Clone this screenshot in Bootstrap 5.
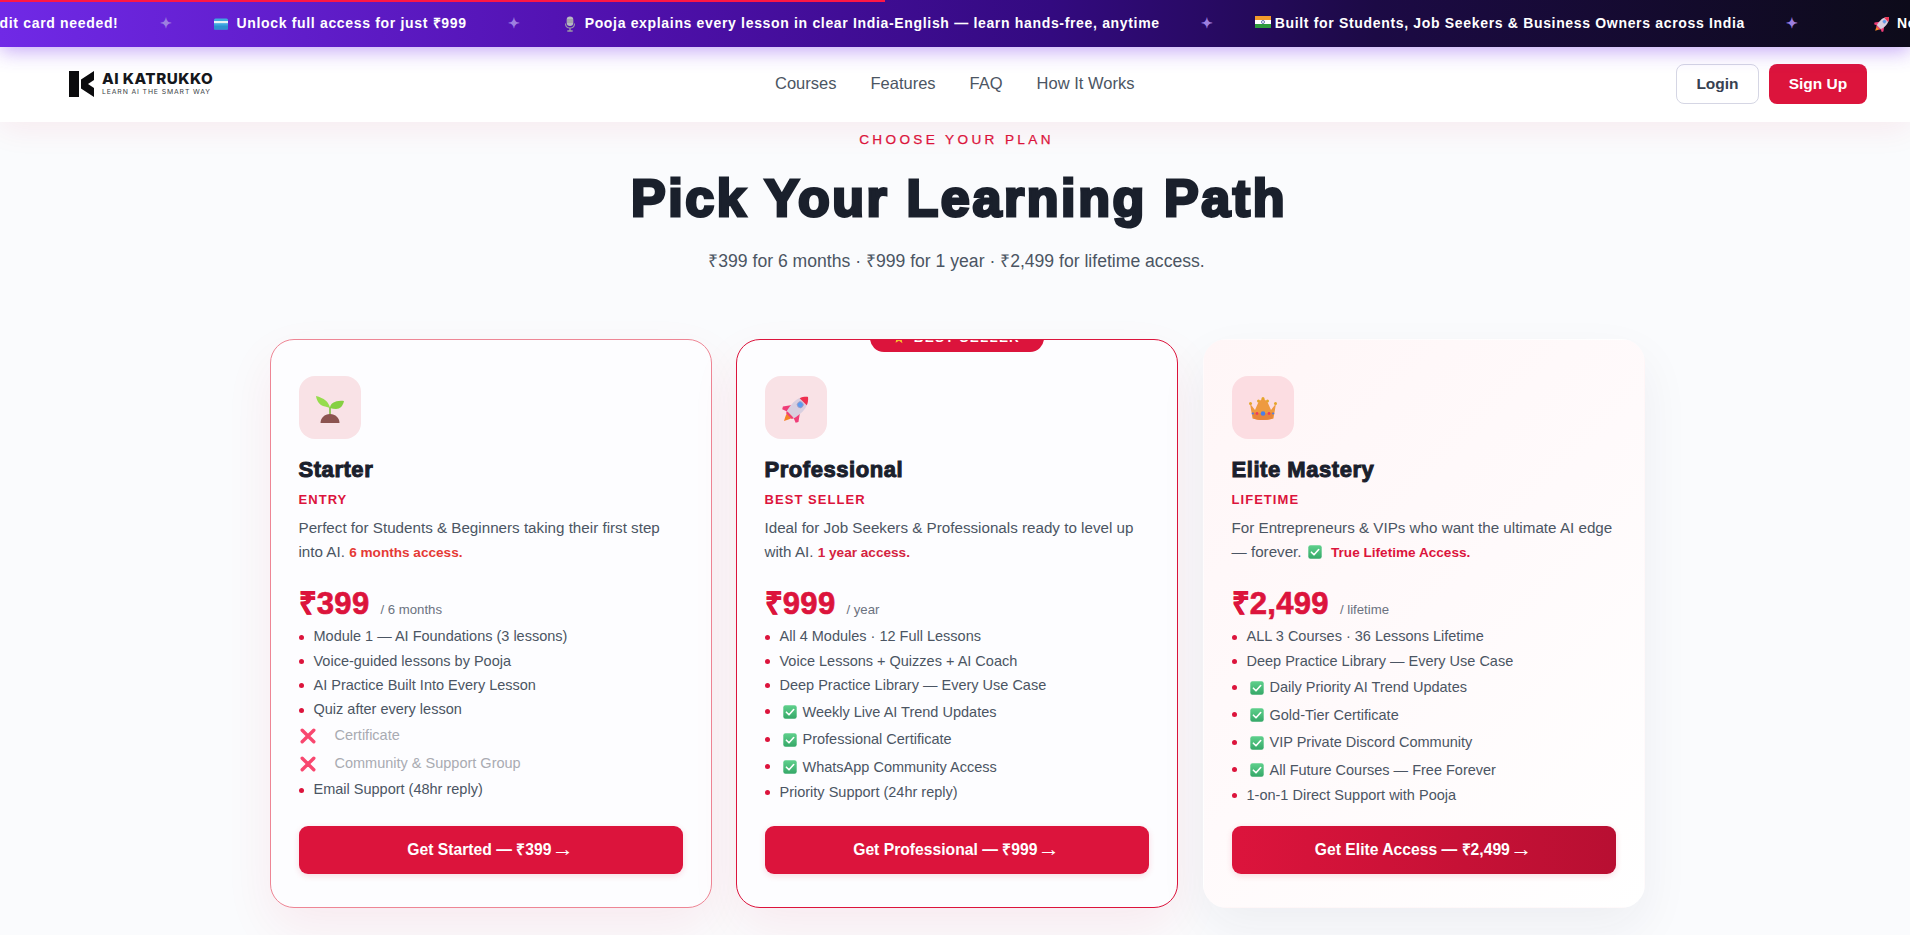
<!DOCTYPE html>
<html lang="en">
<head>
<meta charset="utf-8">
<title>AI Katrukko</title>
<link href="https://cdn.jsdelivr.net/npm/bootstrap@5.3.0/dist/css/bootstrap.min.css" rel="stylesheet">
<style>
html,body{height:935px;overflow:hidden}
body{font-family:"Liberation Sans",Arial,sans-serif;background:#fafbfd;color:#1a202c}
.promo-bar{height:47px;background:linear-gradient(90deg,#7029e6 0%,#4f10ac 33%,#330a80 55%,#1c0a45 72%,#0d0b1a 100%);overflow:hidden;position:relative;z-index:3;box-shadow:0 4px 20px rgba(124,58,237,.45)}
.promo-line{position:absolute;left:0;top:0;width:885px;height:2px;background:#ff1744}
.promo-track{height:47px;transform:translateX(-48px);white-space:nowrap;color:#fff;font-weight:700;font-size:14px;letter-spacing:.67px}
.promo-sep{color:#9d7fe0;font-size:14px;width:95px;text-align:center;flex:none}
.promo-ico{width:16px;height:16px;margin-right:7px;flex:none}
.promo-flag{height:12px;margin-right:4px;margin-bottom:3px}
.promo-far{margin-left:34px}
.top-nav{height:75px;background:#fff;padding:0 43px 2px 69px;position:relative;z-index:2;box-shadow:0 6px 32px rgba(220,20,60,.08)}
.logo-wrap{width:706px;flex:none}
.logo-text{line-height:1;margin-left:7px}
.logo-name{font-family:Inter,"Liberation Sans",sans-serif;font-weight:800;font-size:15.2px;color:#15171c;letter-spacing:.5px;display:block}
.logo-sub{font-family:Inter,"Liberation Sans",sans-serif;font-size:6.85px;color:#3b3f46;letter-spacing:.88px;display:block;margin-top:3px}
.top-links{gap:34px}
.top-links .nav-link{padding:0;color:#4b5563;font-size:16.5px}
.btn-login{width:83px;height:40px;background:#fff;border:1px solid #d5d6e4;border-radius:8px;color:#374151;font-weight:700;font-size:15.5px;padding:0}
.btn-signup{width:98px;height:40px;background:#dc143c;border:0;border-radius:8px;color:#fff;font-weight:700;font-size:15.5px;padding:0}
.nav-acts{gap:10px}
.plans{padding:9px 0 0 3px}
.plans-kicker{font-size:13.6px;line-height:18px;letter-spacing:3.35px;color:#dc143c;font-weight:400;-webkit-text-stroke:.25px #dc143c}
.plans-title{font-size:52px;line-height:62px;font-weight:900;color:#1a202c;margin:18px 0 0;padding-left:5px;letter-spacing:2.6px;-webkit-text-stroke:3px #1a202c}
.plans-sub{font-size:17.6px;line-height:26px;color:#4b5563;margin:19px 0 0}
.plans-grid{width:1374px;margin:65px auto 0}
.plan{height:569px;border-radius:24px;padding:36px 28px 33px;background:#fdfdff;position:relative;overflow:hidden;box-shadow:0 20px 50px rgba(220,20,60,.07)}
.plan-a{border:1px solid #ee8695}
.plan-b{border:1px solid #dc143c}
.plan-c{border:1px solid transparent;margin:0 -1px 0 1px;background:linear-gradient(135deg,#fff6f7 0%,#fffafb 50%,#fff 100%);box-shadow:0 20px 50px rgba(30,30,60,.06)}
.plan-flag{position:absolute;left:50%;top:-13px;transform:translateX(-50%);width:174px;height:25px;background:#dc143c;border-radius:0 0 14px 14px;color:#fff;font-size:13.5px;font-weight:700;letter-spacing:1.2px;text-align:center;line-height:22px}
.plan-ico{width:62px;height:63px;border-radius:16px;background:#f9e2e6}
.plan-c .plan-ico{background:#fcdde2}
.plan-ico svg{margin-top:3px}
.plan-name{font-size:22px;line-height:26px;font-weight:900;margin:18px 0 0;letter-spacing:.55px;color:#1a202c;-webkit-text-stroke:1px #1a202c}
.plan-tag{font-size:13px;line-height:18px;font-weight:700;letter-spacing:1.05px;color:#dc143c;margin-top:8px}
.plan-desc{font-size:15.2px;line-height:24px;color:#4b5563;margin:7px 0 0}
.plan-desc strong{color:#dc143c;font-size:13.6px}
.plan-a .plan-desc strong{color:#e53935}
.plan-b .plan-desc strong{color:#d42340}
.plan-desc svg{margin:0 5px 0 2px;vertical-align:-2px}
.plan-price{margin-top:21px;line-height:36px;display:flex;align-items:baseline}
.price-num{font-size:31px;font-weight:900;color:#dc143c;-webkit-text-stroke:.7px #dc143c;letter-spacing:.3px}
.price-per{font-size:13.2px;color:#6b7280;margin-left:11px}
.feat{list-style:none;margin:-3px 0 0;padding:0;font-size:14.5px;color:#4b5563}
.feat li{display:flex;align-items:center;height:24.3px}
.feat li::before{content:"";width:5px;height:5px;border-radius:50%;background:#dc143c;margin:0 10px 0 0;flex:none}
.feat li.chk{height:27.5px;padding-top:2px}
.feat li.chk::before{margin-top:-2px}
.feat li.chk svg{margin:-1px 6px 0 3px;flex:none}
.feat li.off{height:28px;color:#a9abb2;padding-left:1px}
.feat li.off::before{display:none}
.feat li.off svg{margin-right:19px;flex:none}
.plan-btn{height:48px;background:#dc143c;border:0;border-radius:9px;color:#fff;font-weight:700;font-size:15.7px;margin-top:auto;width:100%;box-shadow:0 2px 6px rgba(220,20,60,.15)}
.plan-btn:hover{background:#c01134;color:#fff}
.btn-arrow{font-weight:400;font-size:22px;line-height:1;vertical-align:-1px;margin-left:-4px}
.plan-c .plan-btn{background:linear-gradient(90deg,#dc143c,#b80f32)}
</style>
</head>
<body>
<svg width="0" height="0" class="position-absolute">
  <defs>
    <linearGradient id="gc" x1="0" y1="0" x2="0" y2="1"><stop offset="0" stop-color="#5fd08c"/><stop offset="1" stop-color="#35a868"/></linearGradient>
    <symbol id="i-check" viewBox="0 0 14 14"><rect x=".3" y=".3" width="13.4" height="13.4" rx="2.2" fill="url(#gc)"/><path d="M3.4 7.2 6 9.8l4.7-5.3" fill="none" stroke="#fff" stroke-width="1.6" stroke-linecap="round" stroke-linejoin="round"/></symbol>
    <symbol id="i-cross" viewBox="0 0 16 16"><path d="M2.2 2.2 13.8 13.8M13.8 2.2 2.2 13.8" stroke="#f8476f" stroke-width="3.4" stroke-linecap="round"/></symbol>
    <symbol id="i-rocket" viewBox="0 0 28 28"><g transform="rotate(45 14 14)"><path d="M10 20c0 4 2 7 4 11 2-4 4-7 4-11z" fill="#f58426"/><path d="M8.500 14 3 21.500l1.500 2.500 5-2zM19.500 14 25 21.500l-1.500 2.500-5-2z" fill="#ef3d78"/><path d="M14-3c-4.500 3.500-6.500 9-6.500 14 0 4 .6 8 1.500 11h10c.9-3 1.500-7 1.500-11 0-5-2-10.500-6.500-14z" fill="#d8cfe0"/><path d="M14-3c-2.400 1.900-4 4.300-5 6.800h10C18 1.300 16.400-1.100 14-3z" fill="#ef2f4f"/><circle cx="14" cy="8" r="3" fill="#5b9cf0" stroke="#a99dc0" stroke-width=".8"/><path d="M9 22h10l-1 2h-8z" fill="#ef3d78"/></g></symbol>
    <symbol id="i-sprout" viewBox="0 0 28 28"><path d="M13.200 12v11h1.600V12z" fill="#7cc23f"/><path d="M14 13C13 7 8 3 0 1c0 0 1 8 7 10 3 1 5 1 7 2z" fill="#96dc4c"/><path d="M14 13c0-5 6-8 14-7-1 5-4 8-8 8-2 0-4-.500-6-1z" fill="#86d042"/><path d="M4.500 28c0-5 4-9 9.500-9s9.500 4 9.500 9z" fill="#8c5450"/></symbol>
    <symbol id="i-crown" viewBox="0 0 28 24"><path d="M1 6.500 6 13l3.500-8L14 1l4.500 4L22 13l5-6.500-2.500 15c-7 2-14 2-21 0z" fill="#ee9a40"/><path d="M3.500 15c7 2 14 2 21 0l-1 6.500c-6.500 2-12.500 2-19 0z" fill="#e8843a"/><circle cx="1.500" cy="6.500" r="1.500" fill="#e5a52a"/><circle cx="9.500" cy="4" r="1.500" fill="#e5a52a"/><circle cx="14" cy="1.500" r="1.500" fill="#e5a52a"/><circle cx="18.500" cy="4" r="1.500" fill="#e5a52a"/><circle cx="26.500" cy="6.500" r="1.500" fill="#e5a52a"/><circle cx="14" cy="16.500" r="2.300" fill="#4a7fe8"/><circle cx="8" cy="16.500" r="1.400" fill="#ef3d5e"/><circle cx="20" cy="16.500" r="1.400" fill="#ef3d5e"/><circle cx="3.800" cy="16.500" r="1.100" fill="#4a7fe8"/><circle cx="24.200" cy="16.500" r="1.100" fill="#4a7fe8"/></symbol>
    <symbol id="i-card" viewBox="0 0 16 16"><rect x="1" y="2.500" width="14" height="11" rx="1.500" fill="#3fa7e0"/><rect x="1" y="5" width="14" height="2.200" fill="#e9f1f5"/><rect x="1" y="9.500" width="14" height="4" fill="#2f8fd0"/></symbol>
    <symbol id="i-mic" viewBox="0 0 16 16"><rect x="4.700" y="0.500" width="6.600" height="9.500" rx="3.300" fill="#b8b8c4"/><path d="M4.700 4h6.600M4.700 6h6.600" stroke="#777" stroke-width=".6"/><path d="M3.500 7.500c0 3.500 2 4.500 4.500 4.500s4.500-1 4.500-4.500" fill="none" stroke="#9a9aa6" stroke-width="1.100"/><path d="M8 12v2.200M5.300 15h5.400" stroke="#9a9aa6" stroke-width="1.400"/></symbol>
    <symbol id="i-flag" viewBox="0 0 16 12"><rect width="16" height="4" fill="#f39a2b"/><rect y="4" width="16" height="4" fill="#fff"/><rect y="8" width="16" height="4" fill="#2e9b3d"/><circle cx="8" cy="6" r="1.500" fill="none" stroke="#23408e" stroke-width=".7"/></symbol>
    <symbol id="i-star" viewBox="0 0 12 12"><path d="m6 .5 1.700 3.600 3.800.5-2.800 2.700.7 3.900L6 8.800l-3.400 1.900.7-3.900L.5 4.600l3.800-.5z" fill="#f6c22e"/></symbol>
  </defs>
</svg>

<div class="promo-bar">
  <div class="promo-line"></div>
  <div class="promo-track d-flex align-items-center">
    <span>No credit card needed!</span><span class="promo-sep">✦</span>
    <svg class="promo-ico"><use href="#i-card"/></svg><span>Unlock full access for just ₹999</span><span class="promo-sep">✦</span>
    <svg class="promo-ico"><use href="#i-mic"/></svg><span>Pooja explains every lesson in clear India-English — learn hands-free, anytime</span><span class="promo-sep">✦</span>
    <svg class="promo-ico promo-flag"><use href="#i-flag"/></svg><span>Built for Students, Job Seekers &amp; Business Owners across India</span><span class="promo-sep">✦</span>
    <svg class="promo-ico promo-far"><use href="#i-rocket"/></svg><span>No credit card needed!</span>
  </div>
</div>

<nav class="navbar top-nav d-flex flex-nowrap justify-content-start align-items-center">
  <div class="logo-wrap d-flex align-items-center">
    <svg width="26" height="26" viewBox="0 0 26 26"><path d="M0 0h10v26H0zM25 0v9l-6 4 6 4v9L12 17.500v-9z" fill="#0b0b0d"/></svg>
    <span class="logo-text"><span class="logo-name">AI KATRUKKO</span><span class="logo-sub">LEARN AI THE SMART WAY</span></span>
  </div>
  <ul class="nav top-links">
    <li class="nav-item"><a class="nav-link" href="#">Courses</a></li>
    <li class="nav-item"><a class="nav-link" href="#">Features</a></li>
    <li class="nav-item"><a class="nav-link" href="#">FAQ</a></li>
    <li class="nav-item"><a class="nav-link" href="#">How It Works</a></li>
  </ul>
  <div class="ms-auto d-flex nav-acts">
    <button class="btn btn-login">Login</button>
    <button class="btn btn-signup">Sign Up</button>
  </div>
</nav>

<section class="plans">
  <div class="text-center">
    <div class="plans-kicker">CHOOSE YOUR PLAN</div>
    <h1 class="plans-title">Pick Your Learning Path</h1>
    <p class="plans-sub">₹399 for 6 months · ₹999 for 1 year · ₹2,499 for lifetime access.</p>
  </div>
  <div class="plans-grid">
    <div class="row g-4">
      <div class="col-4">
        <div class="plan plan-a d-flex flex-column">
          <div class="plan-ico d-flex align-items-center justify-content-center"><svg width="28" height="28"><use href="#i-sprout"/></svg></div>
          <div class="plan-name">Starter</div>
          <div class="plan-tag">ENTRY</div>
          <p class="plan-desc">Perfect for Students &amp; Beginners taking their first step into AI. <strong>6 months access.</strong></p>
          <div class="plan-price"><span class="price-num">₹399</span><span class="price-per">/ 6 months</span></div>
          <ul class="feat">
            <li>Module 1 — AI Foundations (3 lessons)</li>
            <li>Voice-guided lessons by Pooja</li>
            <li>AI Practice Built Into Every Lesson</li>
            <li>Quiz after every lesson</li>
            <li class="off"><svg width="16" height="16"><use href="#i-cross"/></svg>Certificate</li>
            <li class="off"><svg width="16" height="16"><use href="#i-cross"/></svg>Community &amp; Support Group</li>
            <li>Email Support (48hr reply)</li>
          </ul>
          <button class="btn plan-btn">Get Started — ₹399 <span class="btn-arrow">→</span></button>
        </div>
      </div>
      <div class="col-4">
        <div class="plan plan-b d-flex flex-column">
          <div class="plan-flag"><svg width="12" height="12" class="me-1"><use href="#i-star"/></svg> BEST SELLER</div>
          <div class="plan-ico d-flex align-items-center justify-content-center"><svg width="28" height="28"><use href="#i-rocket"/></svg></div>
          <div class="plan-name">Professional</div>
          <div class="plan-tag">BEST SELLER</div>
          <p class="plan-desc">Ideal for Job Seekers &amp; Professionals ready to level up with AI. <strong>1 year access.</strong></p>
          <div class="plan-price"><span class="price-num">₹999</span><span class="price-per">/ year</span></div>
          <ul class="feat">
            <li>All 4 Modules · 12 Full Lessons</li>
            <li>Voice Lessons + Quizzes + AI Coach</li>
            <li>Deep Practice Library — Every Use Case</li>
            <li class="chk"><svg width="14" height="14"><use href="#i-check"/></svg>Weekly Live AI Trend Updates</li>
            <li class="chk"><svg width="14" height="14"><use href="#i-check"/></svg>Professional Certificate</li>
            <li class="chk"><svg width="14" height="14"><use href="#i-check"/></svg>WhatsApp Community Access</li>
            <li>Priority Support (24hr reply)</li>
          </ul>
          <button class="btn plan-btn">Get Professional — ₹999 <span class="btn-arrow">→</span></button>
        </div>
      </div>
      <div class="col-4">
        <div class="plan plan-c d-flex flex-column">
          <div class="plan-ico d-flex align-items-center justify-content-center"><svg width="28" height="24"><use href="#i-crown"/></svg></div>
          <div class="plan-name">Elite Mastery</div>
          <div class="plan-tag">LIFETIME</div>
          <p class="plan-desc">For Entrepreneurs &amp; VIPs who want the ultimate AI edge — forever. <svg width="14" height="14"><use href="#i-check"/></svg> <strong>True Lifetime Access.</strong></p>
          <div class="plan-price"><span class="price-num">₹2,499</span><span class="price-per">/ lifetime</span></div>
          <ul class="feat">
            <li>ALL 3 Courses · 36 Lessons Lifetime</li>
            <li>Deep Practice Library — Every Use Case</li>
            <li class="chk"><svg width="14" height="14"><use href="#i-check"/></svg>Daily Priority AI Trend Updates</li>
            <li class="chk"><svg width="14" height="14"><use href="#i-check"/></svg>Gold-Tier Certificate</li>
            <li class="chk"><svg width="14" height="14"><use href="#i-check"/></svg>VIP Private Discord Community</li>
            <li class="chk"><svg width="14" height="14"><use href="#i-check"/></svg>All Future Courses — Free Forever</li>
            <li>1-on-1 Direct Support with Pooja</li>
          </ul>
          <button class="btn plan-btn">Get Elite Access — ₹2,499 <span class="btn-arrow">→</span></button>
        </div>
      </div>
    </div>
  </div>
</section>
<script src="https://cdn.jsdelivr.net/npm/bootstrap@5.3.0/dist/js/bootstrap.bundle.min.js"></script>
</body>
</html>
